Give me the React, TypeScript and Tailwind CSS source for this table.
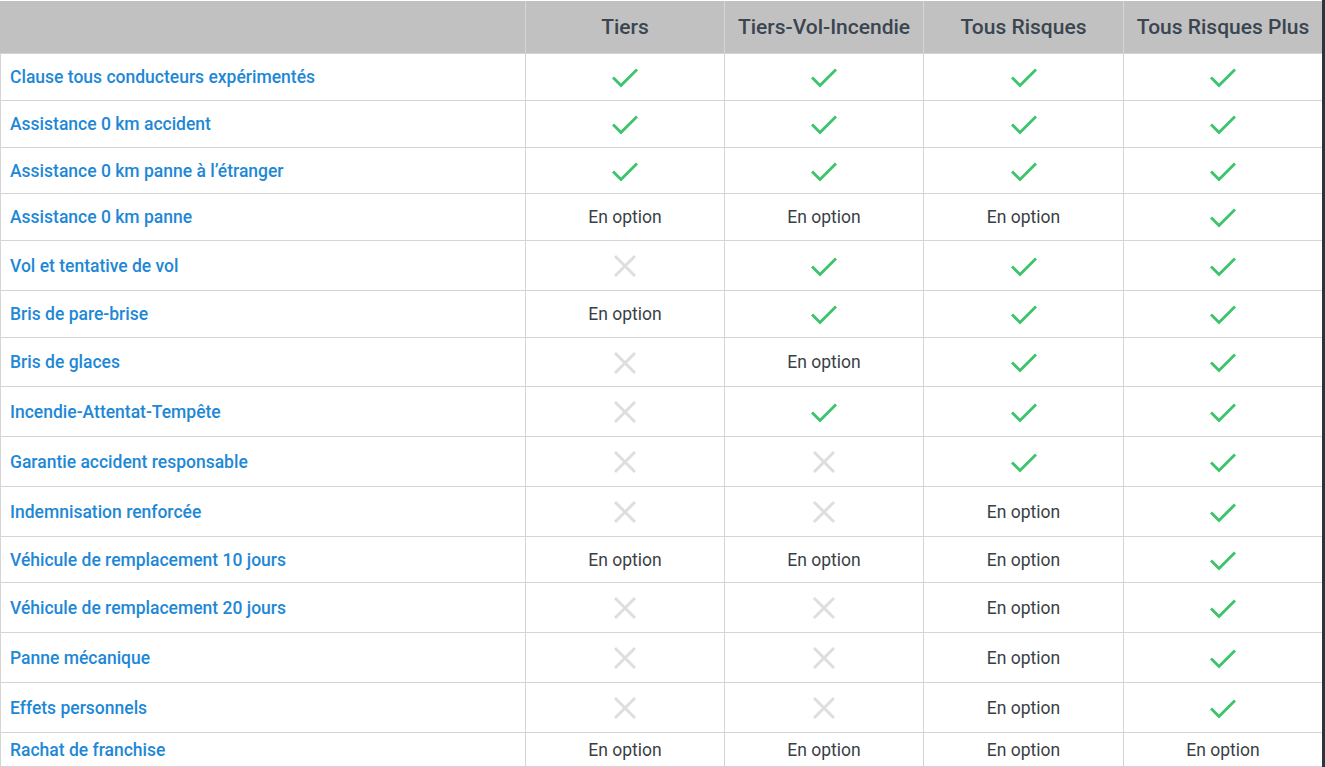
import React from "react"

type Val = "y" | "n" | "o"

const cols = ["Tiers", "Tiers-Vol-Incendie", "Tous Risques", "Tous Risques Plus"]

const rows: { label: string; h: string; vals: Val[] }[] = [
  { label: "Clause tous conducteurs expérimentés", h: "h-[47px]", vals: ["y", "y", "y", "y"] },
  { label: "Assistance 0 km accident", h: "h-[47px]", vals: ["y", "y", "y", "y"] },
  { label: "Assistance 0 km panne à l’étranger", h: "h-[46px]", vals: ["y", "y", "y", "y"] },
  { label: "Assistance 0 km panne", h: "h-[47px]", vals: ["o", "o", "o", "y"] },
  { label: "Vol et tentative de vol", h: "h-[50px]", vals: ["n", "y", "y", "y"] },
  { label: "Bris de pare-brise", h: "h-[47px]", vals: ["o", "y", "y", "y"] },
  { label: "Bris de glaces", h: "h-[49px]", vals: ["n", "o", "y", "y"] },
  { label: "Incendie-Attentat-Tempête", h: "h-[50px]", vals: ["n", "y", "y", "y"] },
  { label: "Garantie accident responsable", h: "h-[50px]", vals: ["n", "n", "y", "y"] },
  { label: "Indemnisation renforcée", h: "h-[50px]", vals: ["n", "n", "o", "y"] },
  { label: "Véhicule de remplacement 10 jours", h: "h-[46px]", vals: ["o", "o", "o", "y"] },
  { label: "Véhicule de remplacement 20 jours", h: "h-[50px]", vals: ["n", "n", "o", "y"] },
  { label: "Panne mécanique", h: "h-[50px]", vals: ["n", "n", "o", "y"] },
  { label: "Effets personnels", h: "h-[50px]", vals: ["n", "n", "o", "y"] },
  { label: "Rachat de franchise", h: "h-[34px]", vals: ["o", "o", "o", "o"] },
]

// column widths incl. right border
const colW = ["w-[199px]", "w-[199px]", "w-[200px]", "w-[198px]"]

function Check() {
  return (
    <svg width="26" height="20" viewBox="0 0 26 20" fill="none" className="mt-[2px]">
      <path d="M2 10.5 L9 17.5 L24 2.5" stroke="#3dc46c" strokeWidth="3" strokeLinecap="square" />
    </svg>
  )
}

function Cross() {
  return (
    <svg width="24" height="24" viewBox="0 0 24 24" fill="none" className="mt-px">
      <path d="M2 2 L22 22 M22 2 L2 22" stroke="#dedede" strokeWidth="3" />
    </svg>
  )
}

function Cell({ v }: { v: Val }) {
  if (v === "y") return <Check />
  if (v === "n") return <Cross />
  return <span className="text-[17.5px] text-[#3a3f46] pt-px">En option</span>
}

export default function App() {
  return (
    <div className="flex w-[1325px] h-[767px] bg-white font-['Roboto',sans-serif] overflow-hidden">
      <div className="flex flex-col mt-px">
        {/* Header */}
        <div className="flex h-[53px] bg-[#c1c1c1] border-b border-[#d4d4d4]">
          <div className="w-[526px] border-r border-[#d6d6d6]" />
          {cols.map((c, i) => (
            <div
              key={c}
              className={`${colW[i]} ${i < 3 ? "border-r border-[#d6d6d6]" : ""} flex items-center justify-center pt-px text-[21px] font-medium text-[#3b4550]`}
            >
              {c}
            </div>
          ))}
        </div>

        {/* Body */}
        {rows.map((r) => (
          <div key={r.label} className={`flex ${r.h} border-b border-[#d4d4d4]`}>
            <div className="w-[526px] border-l border-r border-[#d4d4d4] flex items-center pl-[9px] pt-px text-[17.5px] font-medium text-[#1e88d6]">
              {r.label}
            </div>
            {r.vals.map((v, i) => (
              <div
                key={i}
                className={`${colW[i]} ${i < 3 ? "border-r border-[#d4d4d4]" : ""} flex items-center justify-center`}
              >
                <Cell v={v} />
              </div>
            ))}
          </div>
        ))}
      </div>
      <div className="w-[3px] bg-[#2d3640]" />
    </div>
  )
}
